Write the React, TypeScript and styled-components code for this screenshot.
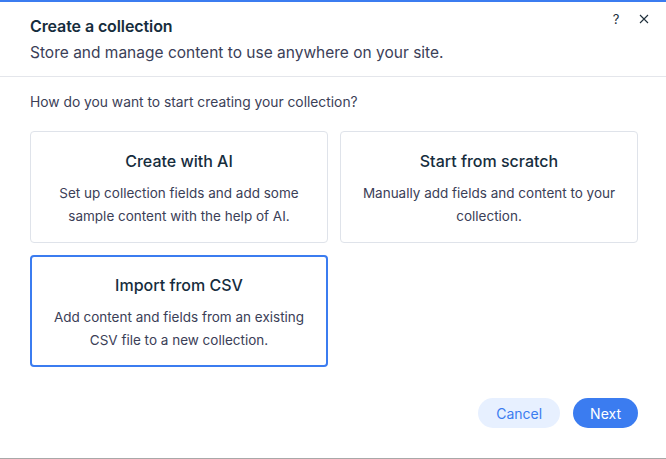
import React from "react";
import styled, {createGlobalStyle} from "styled-components";

const GlobalStyle = createGlobalStyle`
  html, body {
    margin: 0;
    padding: 0;
    background: #ffffff;
  }

  body {
    font-family: "Inter", "Open Sans", sans-serif;
    -webkit-font-smoothing: antialiased;
  }
`;

const Modal = styled.div`
  width: 666px;
  height: 459px;
  box-sizing: border-box;
  border-top: 2px solid #3b7cf0;
  border-bottom: 1px solid #a8a8a8;
  background: #ffffff;
  display: flex;
  flex-direction: column;
  position: relative;
`;

const Header = styled.div`
  padding: 12px 28px 11px 30px;
  border-bottom: 1px solid #e4e6eb;
  display: flex;
  flex-direction: column;
  gap: 3px;
`;

const Title = styled.h1`
  margin: 0;
  font-size: 16px;
  line-height: 24px;
  font-weight: 600;
  color: #162d3d;
  letter-spacing: -0.1px;
`;

const Subtitle = styled.p`
  margin: 0;
  font-size: 15.5px;
  line-height: 24px;
  color: #3b4057;
`;

const HeaderActions = styled.div`
  position: absolute;
  top: 8px;
  right: 14px;
  display: flex;
  align-items: center;
  gap: 12px;
`;

const IconButton = styled.button`
  border: none;
  background: none;
  padding: 0;
  width: 16px;
  height: 18px;
  display: flex;
  align-items: center;
  justify-content: center;
  color: #20303c;
  font-family: "Inter", sans-serif;
  font-size: 13px;
  cursor: pointer;
`;

const Body = styled.div`
  flex: 1;
  padding: 15px 28px 0 30px;
  display: flex;
  flex-direction: column;
`;

const Question = styled.p`
  margin: 0 0 19px 0;
  font-size: 13.8px;
  line-height: 20px;
  color: #3b4057;
`;

const Grid = styled.div`
  display: grid;
  grid-template-columns: 298px 298px;
  gap: 12px;
`;

const Card = styled.div<{ $selected?: boolean }>`
  box-sizing: border-box;
  height: 112px;
  border-radius: 4px;
  border: ${p => p.$selected ? "2px solid #3b7cf0" : "1px solid #dfe3ea"};
  padding: ${p => p.$selected ? "16px 14px 0" : "17px 15px 0"};
  display: flex;
  flex-direction: column;
  align-items: center;
  text-align: center;
  gap: 9px;
  cursor: pointer;
`;

const CardTitle = styled.div`
  font-size: 16px;
  line-height: 24px;
  font-weight: 500;
  color: #162d3d;
`;

const CardText = styled.div`
  font-size: 13.5px;
  line-height: 23px;
  color: #3b4057;
`;

const Footer = styled.div`
  display: flex;
  justify-content: flex-end;
  gap: 13px;
  padding: 0 28px 30px 30px;
`;

const Button = styled.button<{ $primary?: boolean }>`
  height: 30px;
  border: none;
  border-radius: 15px;
  padding: 0 ${p => p.$primary ? "17px" : "18px"};
  font-family: "Inter", "Open Sans", sans-serif;
  font-size: 14px;
  background: ${p => p.$primary ? "#3b7cf0" : "#e7f0ff"};
  color: ${p => p.$primary ? "#ffffff" : "#3b7cf0"};
  cursor: pointer;
`;

const options = [
    {title: "Create with AI", text: ["Set up collection fields and add some", "sample content with the help of AI."]},
    {title: "Start from scratch", text: ["Manually add fields and content to your", "collection."]},
    {title: "Import from CSV", text: ["Add content and fields from an existing", "CSV file to a new collection."], selected: true},
];

export default function App() {
    return (
        <>
            <GlobalStyle/>
            <Modal>
                <Header>
                    <Title>Create a collection</Title>
                    <Subtitle>Store and manage content to use anywhere on your site.</Subtitle>
                </Header>
                <HeaderActions>
                    <IconButton aria-label="Help">?</IconButton>
                    <IconButton aria-label="Close">
                        <svg width="10" height="10" viewBox="0 0 10 10">
                            <path d="M1 1 L9 9 M9 1 L1 9" stroke="#20303c" strokeWidth="1.1" fill="none"/>
                        </svg>
                    </IconButton>
                </HeaderActions>
                <Body>
                    <Question>How do you want to start creating your collection?</Question>
                    <Grid>
                        {options.map(o => (
                            <Card key={o.title} $selected={o.selected}>
                                <CardTitle>{o.title}</CardTitle>
                                <CardText>{o.text[0]}<br/>{o.text[1]}</CardText>
                            </Card>
                        ))}
                    </Grid>
                </Body>
                <Footer>
                    <Button>Cancel</Button>
                    <Button $primary>Next</Button>
                </Footer>
            </Modal>
        </>
    );
}
